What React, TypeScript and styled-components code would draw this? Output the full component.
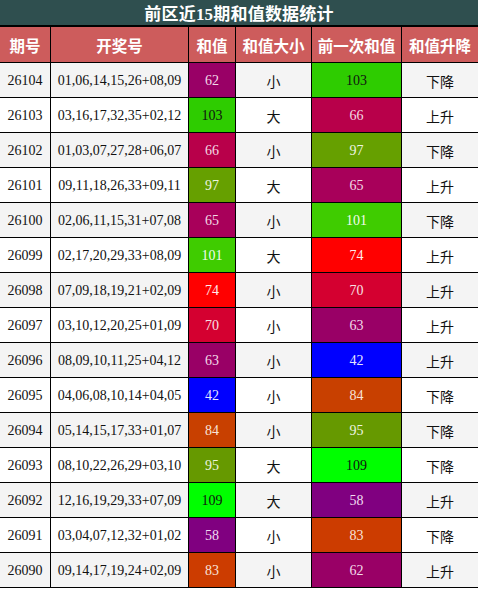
import React from "react";
import styled, { createGlobalStyle } from "styled-components";

const GlobalStyle = createGlobalStyle`
  html, body { margin: 0; padding: 0; background: #fff; }
  * { box-sizing: border-box; }
`;

const COLS = "50px 137px 46px 75px 89px 76px";

const Table = styled.div`
  width: 478px;
  display: flex;
  flex-direction: column;
  gap: 1px;
  background: #000;
  padding-bottom: 1px;
`;

const Title = styled.div`
  height: 25px;
  margin-bottom: 1px;
  background: #2f4f4f;
  color: #fff;
  font-family: "Liberation Serif", "Noto Sans CJK SC", serif;
  font-weight: bold;
  font-size: 17px;
  display: flex;
  align-items: center;
  justify-content: center;
  letter-spacing: 0.2px;
`;

const Row = styled.div<{ $head?: boolean }>`
  display: grid;
  grid-template-columns: ${COLS};
  column-gap: 1px;
  height: ${(p) => (p.$head ? "35px" : "34px")};
`;

const HeadCell = styled.div`
  background: #cd5c5c;
  color: #fff;
  font-family: "Noto Sans CJK SC", sans-serif;
  font-weight: bold;
  font-size: 15.5px;
  display: flex;
  align-items: center;
  justify-content: center;
  white-space: nowrap;
`;

const Cell = styled.div<{ $alt: boolean }>`
  background: ${(p) => (p.$alt ? "#f4f4f4" : "#ffffff")};
  color: #111;
  font-family: "Liberation Serif", "Noto Sans CJK SC", serif;
  font-size: 14px;
  display: flex;
  align-items: center;
  justify-content: center;
  white-space: nowrap;
  padding-top: 1px;
`;

const ValueCell = styled.div<{ $bg: string; $fg: string }>`
  background: ${(p) => p.$bg};
  color: ${(p) => p.$fg};
  font-family: "Liberation Serif", serif;
  font-size: 14px;
  display: flex;
  align-items: center;
  justify-content: center;
  padding-top: 1px;
`;

const COLORS: Record<number, [string, string]> = {
  62: ["#990066", "#f3dbe9"],
  103: ["#2ecc00", "#111111"],
  66: ["#b8004a", "#f3dbe3"],
  97: ["#66a000", "#eef5e0"],
  65: ["#a8005a", "#f3dbe6"],
  101: ["#3fcc00", "#f4fbee"],
  74: ["#ff0000", "#ffecec"],
  70: ["#d40030", "#f8e0e4"],
  63: ["#990066", "#f3dbe9"],
  42: ["#0000ff", "#e6e6ff"],
  84: ["#c84000", "#f8e4d8"],
  95: ["#669900", "#eef5e0"],
  109: ["#00ff00", "#111111"],
  58: ["#800080", "#f0dcf0"],
  83: ["#cc3c00", "#f8e2d8"],
};

type Rec = [string, string, number, string, number, string];

const DATA: Rec[] = [
  ["26104", "01,06,14,15,26+08,09", 62, "小", 103, "下降"],
  ["26103", "03,16,17,32,35+02,12", 103, "大", 66, "上升"],
  ["26102", "01,03,07,27,28+06,07", 66, "小", 97, "下降"],
  ["26101", "09,11,18,26,33+09,11", 97, "大", 65, "上升"],
  ["26100", "02,06,11,15,31+07,08", 65, "小", 101, "下降"],
  ["26099", "02,17,20,29,33+08,09", 101, "大", 74, "上升"],
  ["26098", "07,09,18,19,21+02,09", 74, "小", 70, "上升"],
  ["26097", "03,10,12,20,25+01,09", 70, "小", 63, "上升"],
  ["26096", "08,09,10,11,25+04,12", 63, "小", 42, "上升"],
  ["26095", "04,06,08,10,14+04,05", 42, "小", 84, "下降"],
  ["26094", "05,14,15,17,33+01,07", 84, "小", 95, "下降"],
  ["26093", "08,10,22,26,29+03,10", 95, "大", 109, "下降"],
  ["26092", "12,16,19,29,33+07,09", 109, "大", 58, "上升"],
  ["26091", "03,04,07,12,32+01,02", 58, "小", 83, "下降"],
  ["26090", "09,14,17,19,24+02,09", 83, "小", 62, "上升"],
];

const HEADERS = ["期号", "开奖号", "和值", "和值大小", "前一次和值", "和值升降"];

const Value: React.FC<{ v: number }> = ({ v }) => {
  const [bg, fg] = COLORS[v] ?? ["#888", "#fff"];
  return (
    <ValueCell $bg={bg} $fg={fg}>
      {v}
    </ValueCell>
  );
};

export default function App() {
  return (
    <>
      <GlobalStyle />
      <Table>
        <Title>前区近15期和值数据统计</Title>
        <Row $head>
          {HEADERS.map((h) => (
            <HeadCell key={h}>{h}</HeadCell>
          ))}
        </Row>
        {DATA.map((r, i) => {
          const alt = i % 2 === 0;
          return (
            <Row key={r[0]}>
              <Cell $alt={alt}>{r[0]}</Cell>
              <Cell $alt={alt}>{r[1]}</Cell>
              <Value v={r[2]} />
              <Cell $alt={alt}>{r[3]}</Cell>
              <Value v={r[4]} />
              <Cell $alt={alt}>{r[5]}</Cell>
            </Row>
          );
        })}
      </Table>
    </>
  );
}
